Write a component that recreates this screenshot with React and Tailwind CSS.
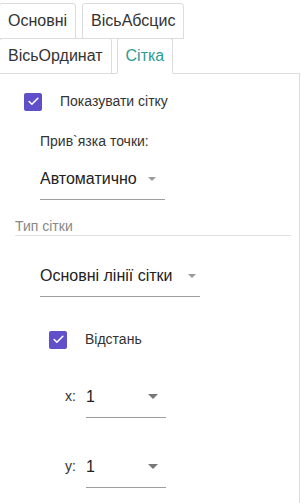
import { Check } from 'lucide-react';

function Tab({ label, active }) {
  return (
    <div
      className={`h-[36px] flex items-center px-2 rounded-t-[3px] border border-[#dcdcdc] bg-white ${
        active ? 'border-b-white text-[#2d9d92] relative z-10' : 'text-[#333]'
      }`}
    >
      {label}
    </div>
  );
}

function Checkbox() {
  return (
    <div className="w-[18px] h-[18px] rounded-[2px] bg-[#5f4fc9] flex items-center justify-center">
      <Check size={13} strokeWidth={3} className="text-white" />
    </div>
  );
}

function Select({ value, width, arrowGap, big }) {
  return (
    <div className={`flex items-center border-b border-[#9e9e9e] h-[38px] pb-[4px] ${width}`}>
      <span className="text-[16px] text-[#222]">{value}</span>
      {big ? (
        <span className={`${arrowGap} w-0 h-0 border-l-[5px] border-r-[5px] border-t-[5px] border-l-transparent border-r-transparent border-t-[#777]`} />
      ) : (
        <span className={`${arrowGap} w-0 h-0 border-l-[4px] border-r-[4px] border-t-[4px] border-l-transparent border-r-transparent border-t-[#9a9a9a]`} />
      )}
    </div>
  );
}

export default function App() {
  return (
    <div className="w-[301px] h-[503px] bg-white overflow-hidden font-['Liberation_Sans',Arial,sans-serif] text-[16px]">
      <div className="flex gap-[6px] pt-[3px] -ml-px">
        <Tab label="Основні" />
        <Tab label="ВісьАбсцис" />
      </div>
      <div className="flex gap-[5px] -mt-px -ml-px">
        <Tab label="ВісьОрдинат" />
        <Tab label="Сітка" active />
      </div>
      <div className="-mt-px mr-px border-t border-r border-[#dcdcdc] h-[440px] text-[13px] text-[#333]">
        <div className="flex items-center gap-[18px] pl-[24px] pt-[17px]">
          <Checkbox />
          <span className="text-[14px]">Показувати сітку</span>
        </div>
        <div className="pl-[40px] pt-[19px] text-[14px]">Прив`язка точки:</div>
        <div className="pl-[40px] pt-[10px]">
          <Select value="Автоматично" width="w-[125px]" arrowGap="ml-[11px]" />
        </div>
        <div className="ml-[15px] mr-[8px] mt-[17px] leading-[18px] border-b border-[#e2e2e2] text-[14px] text-[#888]">
          Тип сітки
        </div>
        <div className="pl-[40px] pt-[23px]">
          <Select value="Основні лінії сітки" width="w-[160px]" arrowGap="ml-[15px]" />
        </div>
        <div className="flex items-center gap-[18px] pl-[49px] pt-[32px]">
          <Checkbox />
          <span className="text-[14px]">Відстань</span>
        </div>
        <div className="flex items-end pl-[65px] pt-[30px]">
          <span className="text-[14px] pb-[11px] w-[21px]">x:</span>
          <Select value="1" width="w-[80px]" arrowGap="ml-[53px]" big />
        </div>
        <div className="flex items-end pl-[65px] pt-[32px]">
          <span className="text-[14px] pb-[11px] w-[21px]">y:</span>
          <Select value="1" width="w-[80px]" arrowGap="ml-[53px]" big />
        </div>
      </div>
    </div>
  );
}
